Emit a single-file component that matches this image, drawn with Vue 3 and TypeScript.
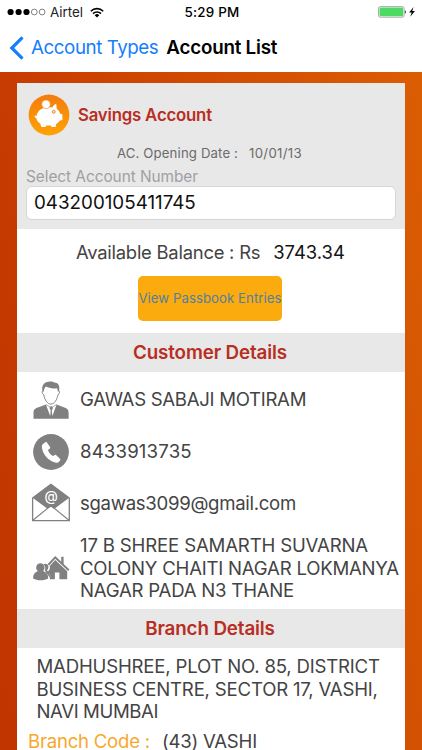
<script setup lang="ts">
interface DetailRow {
  kind: 'person' | 'phone' | 'mail' | 'home'
  lines: string[]
}

const account = {
  type: 'Savings Account',
  opened: '10/01/13',
  number: '043200105411745',
  balance: '3743.34',
}

const details: DetailRow[] = [
  { kind: 'person', lines: ['GAWAS SABAJI MOTIRAM'] },
  { kind: 'phone', lines: ['8433913735'] },
  { kind: 'mail', lines: ['sgawas3099@gmail.com'] },
  {
    kind: 'home',
    lines: ['17 B SHREE SAMARTH SUVARNA', 'COLONY CHAITI NAGAR LOKMANYA', 'NAGAR PADA N3 THANE'],
  },
]

const branchAddress = ['MADHUSHREE, PLOT NO. 85, DISTRICT', 'BUSINESS CENTRE, SECTOR 17, VASHI,', 'NAVI MUMBAI']
</script>

<template>
  <div class="screen">
    <header class="top">
      <div class="status">
        <div class="carrier">
          <svg class="signal" width="39" height="8" viewBox="0 0 39 8">
            <circle cx="3.6" cy="4" r="3.1" fill="#000" />
            <circle cx="11.6" cy="4" r="3.1" fill="#000" />
            <circle cx="19.5" cy="4" r="3.1" fill="#000" />
            <circle cx="27.3" cy="4" r="2.9" fill="none" stroke="#333" stroke-width=".6" />
            <circle cx="35.1" cy="4" r="2.9" fill="none" stroke="#333" stroke-width=".6" />
          </svg>
          <span class="airtel">Airtel</span>
          <svg class="wifi" width="14" height="11" viewBox="0 0 14 11">
            <g fill="none" stroke="#000" stroke-width="1.6">
              <path d="M.8 4.2a8.8 8.8 0 0 1 12.4 0" />
              <path d="M3 6.6a5.7 5.7 0 0 1 8 0" />
            </g>
            <path d="M7 10.6 4.7 8.2a3.3 3.3 0 0 1 4.6 0z" />
          </svg>
        </div>
        <span class="time">5:29 PM</span>
        <div class="power">
          <svg width="38" height="12" viewBox="0 0 38 12">
            <rect x=".5" y=".6" width="25.6" height="10.6" rx="1.8" fill="#fff" stroke="#8d9a8e" stroke-width=".8" />
            <rect x="1.5" y="1.6" width="23.6" height="8.6" rx="1" fill="#4cd964" />
            <path d="M26.9 4.2c1.3.3 1.3 3.2 0 3.5z" fill="#222" />
            <path d="M35.6.9 31.1 6.4h2.6l-1.4 4.4 4.6-5.7h-2.7z" />
          </svg>
        </div>
      </div>
      <nav class="nav">
        <svg class="chevron" width="15" height="24" viewBox="0 0 15 24">
          <path d="M13.5 1.3 2.8 12l10.7 10.7" fill="none" stroke="#157efb" stroke-width="3.2" />
        </svg>
        <span class="back">Account Types</span>
        <h1>Account List</h1>
      </nav>
    </header>

    <main class="backdrop">
      <div class="card">
        <section class="summary">
          <div class="kind">
            <svg width="42" height="42" viewBox="0 0 42 42">
              <defs>
                <linearGradient id="coin" x1="0" y1="0" x2="0" y2="1">
                  <stop offset="0" stop-color="#f47c0c" />
                  <stop offset="1" stop-color="#ffa306" />
                </linearGradient>
              </defs>
              <circle cx="21" cy="21" r="20.4" fill="url(#coin)" />
              <path
                d="M13.400 15c2-1.300 4.700-1.800 7.500-1.800 1.200 0 2.300.2 3.300.4 1-1.800 2.400-3.400 4-3.900l.6 5.300c1.900 1.300 3 3 3.400 4.700l2.200.5v5.700l-2.700.8c-.8 1.400-2 2.500-3.500 3.300L27.600 33h-4l-.7-1.500h-4.600L17.500 33h-4.100l-1.200-3.400c-2.100-1.400-3.500-3.300-3.900-5.600-1.600-.2-2-1.700-1.400-2.600l1.600.6c.5-3 2.200-5.500 4.900-7z"
                fill="#fff"
              />
              <circle cx="18" cy="10.300" r="4.300" fill="#fff" stroke="#f8860b" stroke-width=".6" />
              <circle cx="25.700" cy="17.800" r="1.500" fill="#ffe0bd" stroke="#e98a3c" stroke-width="1" />
            </svg>
            <h2>{{ account.type }}</h2>
          </div>
          <p class="opened"><span>AC. Opening Date :</span><span class="date">{{ account.opened }}</span></p>
          <p class="label">Select Account Number</p>
          <div class="field"><span>{{ account.number }}</span></div>
        </section>

        <section class="balance">
          <p><span class="caption">Available Balance : Rs</span><span class="amount">{{ account.balance }}</span></p>
          <button type="button"><span>View Passbook Entries</span></button>
        </section>

        <h3>Customer Details</h3>
        <ul>
          <li v-for="row in details" :key="row.kind" :class="row.kind">
            <div class="icon">
              <svg v-if="row.kind === 'person'" width="36" height="38" viewBox="0 0 36 38" fill="#808080">
                <path d="M9.600 10.400C8 4.300 11.300.4 17 .4c2 0 3.600.4 4.500 1.200 4.200.1 5.700 3.900 4.400 9l-1.100-.3-.7-3.100c-4.600.6-8.300 0-11.200-1.600-1.200 1.200-1.900 2.700-2.200 5z" />
                <path d="M10.300 9.500c-1.700.2-1.500 3.500.5 4.300.8 5 3.700 9.300 7.100 9.300s6.200-4.300 7-9.300c2-.8 2.200-4.100.5-4.300" fill="none" stroke="#888" stroke-width="1" />
                <path d="M.5 37.700v-6c0-3.400 2-4.700 6.400-5.900l6-2.200 4.300 11.400.5-5.500-1.300-2.700 1.200-1.500h1.200l1.200 1.500-1.200 2.700.6 5.500 4.200-11.400 5.700 2.200c4.300 1.200 6.300 2.500 6.300 5.900v6z" />
                <path d="m13 23.500 4.800 3.100M23.400 23.500l-4.600 3.100" fill="none" stroke="#999" stroke-width=".8" />
              </svg>
              <svg v-else-if="row.kind === 'phone'" width="36" height="36" viewBox="0 0 36 36">
                <circle cx="18" cy="18" r="17.900" fill="#808080" />
                <path d="M10 10.100 12.500 8.100c.5-.3 1-.2 1.400.3l3.200 4.700c.3.500.2 1-.2 1.300l-2 1.500c.9 2.600 2.600 4.700 5.100 6.200l2-1.100c.5-.3.900-.2 1.300.2l3.800 3.700c.4.4.4 1 0 1.500l-2 2.100c-1.400 1-4.900-.2-8.200-2.400C12.600 23 9.100 17.600 8.900 12.900c0-1.200.2-2.200 1.100-2.800z" fill="#fff" />
              </svg>
              <svg v-else-if="row.kind === 'mail'" width="40" height="40" viewBox="0 0 40 40">
                <path d="M1.600 15 19.900 1.200 38.300 15v22.700H1.600z" fill="#fff" stroke="#808080" stroke-width="1.300" />
                <path d="M1.600 14.700 19.900.9l18.400 13.800-15 11.100-3.400-2.300-3.400 2.300z" fill="#808080" />
                <path d="m1.600 37.500 15-12.200 3.300-2.200 3.400 2.200 15 12.200" fill="none" stroke="#808080" stroke-width="1.100" />
                <text x="19.900" y="18" text-anchor="middle" fill="#fff" font-size="13.500" font-weight="500" font-family="Inter, sans-serif">@</text>
              </svg>
              <svg v-else width="37" height="26" viewBox="0 0 37 26" fill="#808080">
                <path d="m14.500 9.200 7.700-8.200L36.500 14.600l-1.300 1.300L22.200 3.800l-6.100 6.700z" />
                <path d="m16.700 10.900 5.500-5.800 12 11.200v7.900h-7.800v-6.700h-4.500v6.700h-5.200c1.400-4.500-.4-6-1.800-7.700 2-1.700 2.200-3.700 1.800-5.600zM28.200 1.800h2.400v7.700l-2.400-2.300z" />
                <path d="M10.400 9.300c4.700-2.200 6.600 2.900 3.500 6.200 2.600 1.400 3.600 3.700 2.800 7.500-2-4.800-5.200-6-4.600-8.300.5-1.900.2-3.700-1.700-5.400z" />
                <path d="M3.200 12.400c.3-5.400 8.100-5.400 8.300 0 0 1.700-.7 2.800-1.400 3.700 3.600 1.300 5.200 3.700 5.100 7.300-4 2.400-11.100 2.400-15.100 0-.1-3.600 1.500-6 4.800-7.300-.9-.9-1.800-2-1.700-3.700z" />
              </svg>
            </div>
            <div class="text">
              <span v-for="line in row.lines" :key="line">{{ line }}</span>
            </div>
          </li>
        </ul>

        <h3>Branch Details</h3>
        <div class="branch">
          <p v-for="line in branchAddress" :key="line">{{ line }}</p>
        </div>
        <p class="code"><span class="code-label">Branch Code :</span><span>(43) VASHI</span></p>
      </div>
    </main>
  </div>
</template>

<style>
body {
  margin: 0;
  overflow: hidden;
}
</style>

<style scoped>
.screen {
  width: 422px;
  height: 750px;
  overflow: hidden;
  display: flex;
  flex-direction: column;
  font-family: Inter, 'Liberation Sans', sans-serif;
  background: #fff;
  color: #444;
}
h1, h2, h3, p, ul {
  margin: 0;
  padding: 0;
  white-space: nowrap;
}
svg {
  display: block;
  flex: none;
}
.top {
  height: 72px;
  flex: none;
  color: #000;
}
.status {
  height: 24px;
  display: grid;
  grid-template-columns: 1fr auto 1fr;
  align-items: center;
  padding: 0 6px 0 7px;
  font-size: 13.4px;
}
.carrier {
  display: flex;
  align-items: center;
}
.airtel {
  margin: 0 7px 0 4px;
  color: #222;
}
.time {
  font-weight: 500;
  letter-spacing: 0.25px;
  padding-left: 1px;
}
.power {
  justify-self: end;
}
.nav {
  height: 47px;
  display: flex;
  align-items: center;
  padding-left: 9px;
  font-size: 18.8px;
}
.back {
  margin-left: 7px;
  color: #157efb;
  letter-spacing: -0.45px;
}
h1 {
  margin-left: 8px;
  font-size: 18.8px;
  font-weight: 600;
  letter-spacing: -0.22px;
}
.backdrop {
  flex: 1;
  min-height: 0;
  padding: 11px 17px 0;
  background:
    linear-gradient(180deg, rgba(150, 0, 0, 0) 0%, rgba(150, 0, 0, 0.12) 100%),
    linear-gradient(90deg, #c63b01 0%, #cb4201 20%, #db5d03 100%);
}
.card {
  height: 667px;
  overflow: hidden;
  background: #fff;
}
.summary {
  height: 146px;
  background: #e8e8e8;
  padding: 0 9px;
  box-sizing: border-box;
}
.kind {
  height: 64px;
  display: flex;
  align-items: center;
  padding-left: 2px;
  gap: 8px;
}
h2 {
  font-size: 16.8px;
  font-weight: 600;
  letter-spacing: -0.2px;
  color: #b82e22;
}
.opened {
  height: 12px;
  line-height: 12px;
  padding-left: 91px;
  display: flex;
  gap: 11px;
  font-size: 13.2px;
  letter-spacing: 0.14px;
  color: #6b6b6b;
}
.date {
  letter-spacing: 0.3px;
}
.label {
  height: 27px;
  line-height: 35px;
  font-size: 15.4px;
  letter-spacing: -0.05px;
  color: #a0a0a0;
}
.field {
  height: 34px;
  box-sizing: border-box;
  display: flex;
  align-items: center;
  padding: 0 7px 2px;
  border: 1px solid #d6d6d6;
  border-radius: 6px;
  background: #fff;
  font-size: 18.8px;
  color: #111;
  width: 370px;
}
.balance {
  height: 104px;
}
.balance p {
  height: 47px;
  line-height: 47px;
  padding-left: 59px;
  display: flex;
  gap: 13px;
  font-size: 18.4px;
}
.caption {
  letter-spacing: -0.23px;
}
.amount {
  color: #151515;
}
button {
  display: flex;
  align-items: center;
  justify-content: center;
  width: 144px;
  height: 45px;
  margin: 0 0 0 121px;
  padding: 0 0 1px;
  border: 0;
  border-radius: 5px;
  background: #fbab0d;
  color: #527fa5;
  font: 13.2px Inter, sans-serif;
  letter-spacing: 0.06px;
  white-space: nowrap;
}
h3 {
  height: 39px;
  line-height: 39px;
  padding-right: 2px;
  box-sizing: border-box;
  text-align: center;
  background: #e8e8e8;
  color: #b82e22;
  font-size: 18.8px;
  font-weight: 600;
  letter-spacing: -0.13px;
}
ul {
  height: 237px;
  list-style: none;
}
li {
  display: flex;
  align-items: center;
  font-size: 18.6px;
}
.person {
  height: 55px;
  letter-spacing: -0.3px;
}
.phone {
  height: 49px;
  letter-spacing: 0.17px;
}
.mail {
  height: 54px;
  letter-spacing: -0.3px;
}
.home {
  height: 76px;
  letter-spacing: -0.23px;
}
.icon {
  width: 63px;
  flex: none;
  display: flex;
}
.icon svg {
  margin-left: 16px;
}
.mail .icon svg {
  margin-left: 14px;
}
.text {
  display: flex;
  flex-direction: column;
  line-height: 22.7px;
  white-space: nowrap;
}
.home .text span:first-child {
  letter-spacing: -0.17px;
}
.branch {
  padding: 6.8px 0 0 19.5px;
  line-height: 22.7px;
  font-size: 18.6px;
  letter-spacing: -0.2px;
}
.branch p:last-child {
  letter-spacing: -0.4px;
}
.code {
  display: flex;
  gap: 12px;
  padding: 9px 0 0 11px;
  line-height: 18px;
  font-size: 18.6px;
  letter-spacing: -0.24px;
}
.code-label {
  color: #f9a72c;
}
</style>
